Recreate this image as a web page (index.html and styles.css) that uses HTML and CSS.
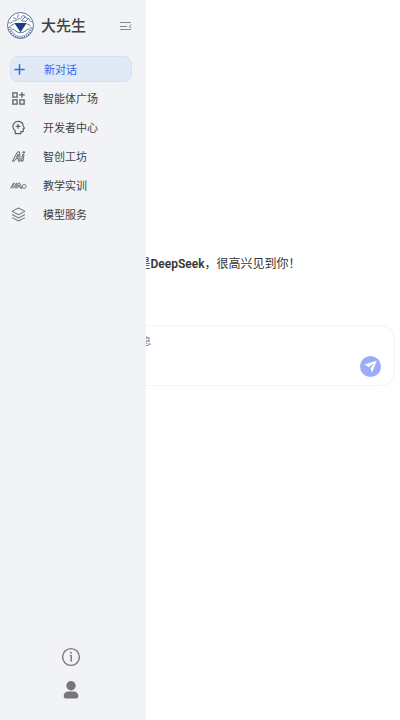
FILE: index.html
```html
<!DOCTYPE html>
<html lang="zh-CN">
  <head>
    <meta charset="UTF-8" />
    <meta name="viewport" content="width=device-width, initial-scale=1.0" />
    <title>大先生</title>
    <link rel="stylesheet" href="styles.css">
  </head>
  <body>
    <aside class="sidebar">
      <header class="brand">
        <svg class="logo" viewBox="0 0 52 52" fill="none" stroke="#36578f">
          <circle cx="26" cy="26" r="25" fill="#fff" stroke-width="1.6" />
          <path d="M4.500 28a21.500 21.500 0 0 0 43 0" stroke-width="3.500" stroke-dasharray="2.500 2" stroke="#7088b5" />
          <path d="M7 28a19 19 0 0 0 38 0" stroke-width="1" />
          <path d="M4 21c6 2 6-5 11-4s4-6 9-4 3-7 8-6 2 6 7 5 3 6 9 7M12 11l7 3M22 5l-2 6M35 9l-7 8 9 1M41 13l-5 5M7 26l7-3M45 26l-7-3" stroke-width="1.5" />
          <path d="M14 21h24L26 39z" fill="#173f82" stroke="none" />
          <path d="M10 33c6 1 8 7 16 7s10-6 16-7" stroke-width="1.6" />
        </svg>
        <h1>大先生</h1>
        <button class="icon-button collapse" type="button" aria-label="收起侧边栏">
          <svg viewBox="0 0 12 10" fill="none" stroke="#85888c">
            <path d="M0 1.500h11M0 5.500h7M0 8.500h11M11.500 3.500 9 5.500l2.500 1.500" />
          </svg>
        </button>
      </header>

      <nav class="menu">
        <a class="item active" href="#">
          <svg viewBox="0 0 16 16" fill="none" stroke="#2a74cf" stroke-width="1.6">
            <path d="M8 2.500v11M2.500 8h11" />
          </svg>
          新对话
        </a>
        <a class="item" href="#">
          <svg viewBox="0 0 16 16" fill="none" stroke="#5c5f64" stroke-width="1.4">
            <path d="M2 2h4.500v4.500H2zM2 9.500h4.500V14H2zM9.500 9.500H14V14H9.500zM11.700 1.200v6M8.700 4.200h6" />
          </svg>
          智能体广场
        </a>
        <a class="item" href="#">
          <svg viewBox="0 0 16 16" fill="none" stroke="#5c5f64" stroke-width="1.3" stroke-linejoin="round">
            <path d="M4.500 14.500v-3C2.700 10 2 8.500 2 6.800 2 3.800 4.500 1.500 7.500 1.500c3 0 5.200 2 5.500 4.800l1.300 2.500-1.300.7v2.800h-2.500v2.200z" />
            <path d="M7.500 4.200v5M5 6.700h5" />
          </svg>
          开发者中心
        </a>
        <a class="item" href="#">
          <svg viewBox="0 0 16 16" fill="none" stroke="#5c5f64" stroke-linejoin="round">
            <path d="M1.500 13 7 3h2l.8 10H8l-.2-2.700H5L3.500 13zM5.800 8.800h2L7.600 5.500zM12.300 6h1.600l-1.200 7h-1.600zM12.800 3h1.700l-.2 1.300h-1.700z" />
          </svg>
          智创工坊
        </a>
        <a class="item" href="#">
          <svg viewBox="0 0 16 16" fill="none" stroke="#5c5f64" stroke-width=".9" stroke-linejoin="round" overflow="visible">
            <path d="M-.5 11 2.500 5.500h1L1 11M2.500 11 5.500 5.500h1L4.500 11M5.500 11l2.500-5.500h1.300L11.500 11H10L8.600 7.500 7 11" />
            <circle cx="14" cy="9" r="2.100" />
          </svg>
          教学实训
        </a>
        <a class="item" href="#">
          <svg viewBox="0 0 16 16" fill="none" stroke="#777a80" stroke-width="1.100" stroke-linejoin="round">
            <path d="M8 1 14.800 4.700 8 8.300 1.200 4.700zM1.200 8 8 11.700 14.800 8M1.200 11.300 8 15l6.800-3.700" />
          </svg>
          模型服务
        </a>
      </nav>

      <footer class="tools">
        <button class="icon-button" type="button" aria-label="关于">
          <svg viewBox="0 0 20 20" fill="none" stroke="#777">
            <circle cx="10" cy="10" r="8.400" stroke-width="1.400" />
            <path d="M8.800 8.600h1.400v6.200" stroke-width="1.400" />
            <circle cx="10" cy="5.800" r="1" fill="#777" stroke="none" />
          </svg>
        </button>
        <button class="icon-button" type="button" aria-label="个人中心">
          <svg viewBox="0 0 20 20" fill="#777">
            <circle cx="10" cy="5.800" r="4.700" />
            <path d="M2.700 16C2.700 13 5 11.500 7 11.500h6c2 0 4.300 1.500 4.300 4.500 0 1.800-1 2.500-2.300 2.500H5c-1.300 0-2.300-.7-2.300-2.500z" />
          </svg>
        </button>
      </footer>
    </aside>

    <main class="chat">
      <h2>我是<strong>DeepSeek</strong>，很高兴见到你！</h2>
      <form class="composer">
        <textarea aria-label="消息" placeholder="给 DeepSeek 发送消息"></textarea>
        <button class="send" type="button" aria-label="发送">
          <svg viewBox="0 0 22 22" fill="#fff">
            <path d="M17.500 5 4.500 9l4.700 2.500L15 7.500l-4 5.500 1.500 4.500z" />
          </svg>
        </button>
      </form>
    </main>
  </body>
</html>
```

FILE: styles.css
```css
* {
  box-sizing: border-box;
}

body {
  margin: 0;
  min-height: 100vh;
  background-color: #fff;
  color: #404247;
  font-family: Roboto, "Noto Sans CJK SC", sans-serif;
  font-size: 11px;
}

button {
  padding: 0;
  border: none;
  background: none;
  cursor: pointer;
}

svg {
  display: block;
}

.sidebar {
  position: fixed;
  top: 0;
  bottom: 0;
  left: 0;
  z-index: 10;
  width: 146px;
  display: flex;
  flex-direction: column;
  background-color: #f2f3f6;
}

.brand {
  display: flex;
  align-items: center;
  padding: 12px 14px 17px 7px;
}

.logo {
  width: 27px;
  height: 27px;
}

.brand h1 {
  margin: 0 auto 0 7px;
  font-size: 15px;
  line-height: 20px;
  font-weight: 500;
}

.collapse svg {
  width: 12px;
  height: 10px;
}

.menu {
  display: flex;
  flex-direction: column;
  gap: 3px;
  padding: 0 14px 0 10px;
}

.item {
  display: flex;
  align-items: center;
  gap: 17px;
  height: 26px;
  border: 1px solid transparent;
  border-radius: 8px;
  color: inherit;
  text-decoration: none;
}

.item svg {
  width: 15px;
  height: 15px;
}

.item.active {
  padding-left: 1px;
  border-color: #d3e0f5;
  background-color: #e2e9f6;
  color: #2f6bed;
}

.tools {
  display: flex;
  flex-direction: column;
  align-items: center;
  gap: 13px;
  margin-top: auto;
  padding: 0 4px 20px 0;
}

.tools svg {
  width: 20px;
  height: 20px;
}

.chat {
  display: flex;
  flex-direction: column;
  justify-content: center;
  gap: 51px;
  min-height: 100vh;
  padding: 0 5px 80px 6px;
}

.chat h2 {
  margin: 0;
  padding-left: 26px;
  color: #333;
  font-size: 12px;
  line-height: 20px;
  font-weight: 400;
  text-align: center;
}

.chat h2 strong {
  font-weight: 600;
}

.composer {
  display: flex;
  align-items: flex-end;
  height: 61px;
  padding: 8px 13px;
  border: 1px solid #f4f4f5;
  border-radius: 14px;
}

.composer textarea {
  flex: 1;
  height: 43px;
  padding: 1px 0 0 32px;
  border: none;
  outline: none;
  resize: none;
  background: none;
  font: inherit;
  font-size: 10px;
  line-height: 14px;
}

.composer textarea::placeholder {
  color: #777;
}

.send {
  width: 21px;
  height: 21px;
  border-radius: 50%;
  background-color: #9badf8;
}
```
